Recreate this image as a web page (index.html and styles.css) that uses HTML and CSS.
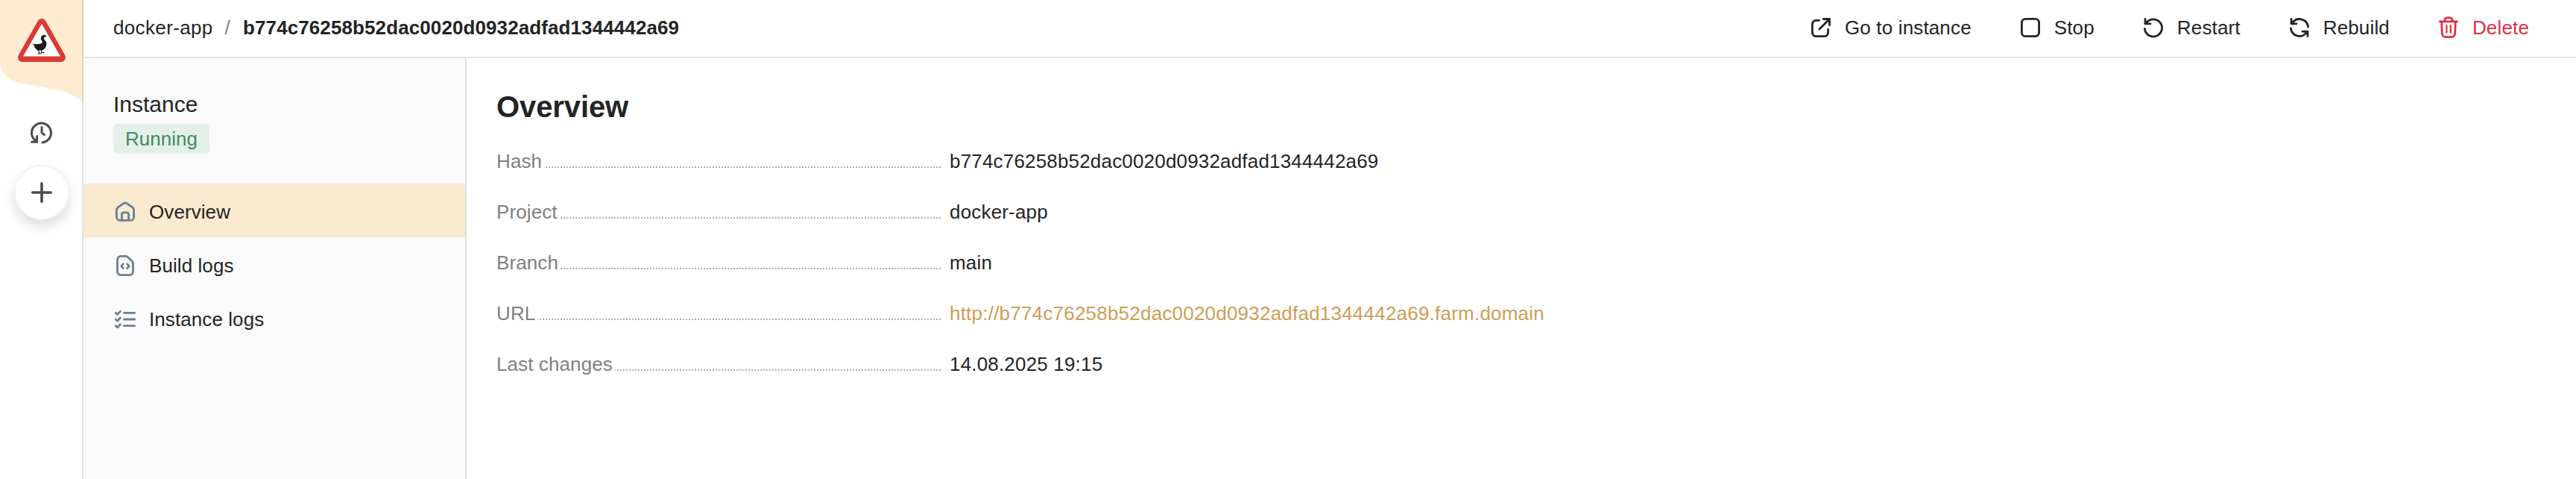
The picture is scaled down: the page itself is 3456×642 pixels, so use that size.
FILE: index.html
```html
<!DOCTYPE html>
<html lang="en">
<head>
<meta charset="utf-8">
<title>docker-app</title>
<link rel="stylesheet" href="styles.css">
</head>
<body>
<div class="app">
  <nav class="rail">
    <a class="brand" href="#">
      <svg width="112" height="140" viewBox="0 0 112 140">
        <path fill="#fdecd2" d="M0 0H112V137C102 129 92 124 80 121L26 111C12 109 1 98 0 83Z"/>
        <path fill="#dc3b33" stroke="#dc3b33" stroke-width="12" stroke-linejoin="round" d="M56 31L82 77H30Z"/>
        <path fill="#fff" d="M56 32L81 75.5H31Z"/>
        <g transform="scale(.33333)">
          <path fill="#1d1b1c" d="M165 151C166 143 174 139 181 141L188 146L181 149C174 151 177 157 181 162C188 169 189 178 185 187C181 197 176 200 170 202L152 203C144 198 138 190 138 184L132 176C140 178 152 178 162 176C170 174 172 170 169 165C165 160 163 156 165 151Z"/>
          <path fill="none" stroke="#1d1b1c" stroke-width="3.5" d="M155 200L158 215M152 216H166M167 200V212M164 212H178"/>
        </g>
      </svg>
    </a>
    <a class="history" href="#">
      <svg width="32" height="32" viewBox="0 0 32 32" class="icon thick"><path d="M17 29A13 13 0 1 0 6.5 25.5L9 27.5M9.6 20.5V28.2H2.6M16 8.5V15.5L19.3 18.6"/></svg>
    </a>
    <button class="add">
      <svg width="32" height="32" viewBox="0 0 32 32" class="icon plus"><path d="M16 3.7V28.3M3.7 16H28.3"/></svg>
    </button>
  </nav>
  <div class="page">
    <header class="topbar">
      <div class="crumbs">
        <a class="crumb" href="#">docker-app</a><span class="slash">/</span><strong class="current">b774c76258b52dac0020d0932adfad1344442a69</strong>
      </div>
      <div class="actions">
        <button class="action"><svg width="32" height="32" viewBox="0 0 32 32" class="icon"><path d="M13.5 6.4H9.4A5 5 0 0 0 4.4 11.4V22.6A5 5 0 0 0 9.4 27.6H20.6A5 5 0 0 0 25.6 22.6V18.5M19.3 4.5H27.5V12.7M27 5L14 18"/></svg>Go to instance</button>
        <button class="action"><svg width="32" height="32" viewBox="0 0 32 32" class="icon"><rect x="4.4" y="4.4" width="23.2" height="23.2" rx="5"/></svg>Stop</button>
        <button class="action"><svg width="32" height="32" viewBox="0 0 32 32" class="icon"><path d="M4.4 17.5A11.6 11.6 0 1 0 7 9M5 4.5V10.8H12M5.5 10.5L9 7"/></svg>Restart</button>
        <button class="action"><svg width="32" height="32" viewBox="0 0 32 32" class="icon"><path d="M7 9A11.6 11.6 0 0 1 27.6 15M5 4.5V10.8H12M5.5 10.5L9 7M4.4 17A11.6 11.6 0 0 0 25 23M27 27.5V21.2H20M26.5 21.5L23 25"/></svg>Rebuild</button>
        <button class="action danger"><svg width="32" height="32" viewBox="0 0 32 32" class="icon"><path d="M4.3 7.8H27.7M10.7 7.5V6.8A4.2 4.2 0 0 1 14.9 2.6H17.1A4.2 4.2 0 0 1 21.3 6.8V7.5M6.7 8.5L7.3 24.2A4.6 4.6 0 0 0 11.9 28.6H20.1A4.6 4.6 0 0 0 24.7 24.2L25.3 8.5"/><path stroke-width="2.2" d="M13.4 13.3V22.7M18.8 13.3V22.7"/></svg>Delete</button>
      </div>
    </header>
    <div class="body">
      <aside class="sidebar">
        <div class="summary">
          <div class="kind">Instance</div>
          <span class="badge">Running</span>
        </div>
        <a class="item active" href="#"><svg width="32" height="32" viewBox="0 0 32 32" class="icon"><path d="M13.9 4.7Q16 3.3 18.1 4.7L25.4 9.6Q27.6 11.2 27.6 13.8V23A4.3 4.3 0 0 1 23.3 27.3H8.7A4.3 4.3 0 0 1 4.4 23V13.8Q4.4 11.2 6.6 9.6ZM11.4 27V19.3A2.5 2.5 0 0 1 13.9 16.8H18.1A2.5 2.5 0 0 1 20.6 19.3V27"/></svg>Overview</a>
        <a class="item" href="#"><svg width="32" height="32" viewBox="0 0 32 32" class="icon"><path d="M10.2 3.4H16.4Q18.2 3.4 19.6 4.7L25.2 10.1Q26.5 11.4 26.5 13.2V24A4.6 4.6 0 0 1 21.9 28.6H10.1A4.6 4.6 0 0 1 5.5 24V8A4.6 4.6 0 0 1 10.2 3.4ZM13.4 13.7L10.8 16.7L13.4 19.7M18.6 13.7L21.2 16.7L18.6 19.7"/></svg>Build logs</a>
        <a class="item" href="#"><svg width="32" height="32" viewBox="0 0 32 32" class="icon"><path d="M14.5 7.3H28.6M14.5 16H28.6M14.5 24.7H28.6M3.2 7.3L5.6 9.4L9.4 5.3M3.2 16L5.6 18.1L9.4 14M3.2 24.7L5.6 26.8L9.4 22.7"/></svg>Instance logs</a>
      </aside>
      <main class="content">
        <h1 class="title">Overview</h1>
        <dl class="facts">
          <div class="fact"><dt class="label">Hash</dt><dd class="value">b774c76258b52dac0020d0932adfad1344442a69</dd></div>
          <div class="fact"><dt class="label">Project</dt><dd class="value">docker-app</dd></div>
          <div class="fact"><dt class="label">Branch</dt><dd class="value">main</dd></div>
          <div class="fact"><dt class="label">URL</dt><dd class="value"><a class="link" href="#">http://b774c76258b52dac0020d0932adfad1344442a69.farm.domain</a></dd></div>
          <div class="fact"><dt class="label">Last changes</dt><dd class="value">14.08.2025 19:15</dd></div>
        </dl>
      </main>
    </div>
  </div>
</div>
</body>
</html>
```
FILE: styles.css
```css
* { box-sizing: border-box; }
body {
  margin: 0;
  background: #fff;
  color: #242424;
  font-family: "Liberation Sans", Arial, sans-serif;
  font-size: 26px;
  line-height: 40px;
  letter-spacing: 0.22px;
}
a { color: inherit; text-decoration: none; }
button { font: inherit; letter-spacing: inherit; color: inherit; background: none; border: 0; padding: 0; }
.app { display: flex; height: 642px; overflow: hidden; }
.icon {
  flex: none;
  display: block;
  fill: none;
  stroke: currentColor;
  stroke-width: 2.8;
  stroke-linecap: round;
  stroke-linejoin: round;
}
.thick { stroke-width: 3; }
.plus { stroke-width: 3.6; }

.rail {
  position: relative;
  flex: none;
  width: 112px;
  display: flex;
  flex-direction: column;
  align-items: center;
  color: #4b4b4b;
}
.rail::after {
  content: "";
  position: absolute;
  inset: 0 0 0 auto;
  width: 2px;
  background: rgba(0, 0, 0, 0.11);
}
.brand { height: 140px; }
.brand svg { display: block; }
.history { margin-top: 22px; }
.add {
  display: flex;
  align-items: center;
  justify-content: center;
  width: 74px;
  height: 74px;
  margin-top: 27px;
  border: 2px solid #f4f4f4;
  border-radius: 50%;
  background: #fff;
  background-clip: padding-box;
  box-shadow: 0 8px 16px rgba(0, 0, 0, 0.14);
}

.page { flex: 1; min-width: 0; display: flex; flex-direction: column; }
.topbar {
  flex: none;
  height: 78px;
  padding: 0 63px 2px 40px;
  display: flex;
  align-items: center;
  justify-content: space-between;
  border-bottom: 2px solid #e3e3e3;
}
.crumbs { display: flex; }
.crumb { letter-spacing: 0.35px; }
.slash { margin: 0 17px 0 16px; color: #808080; }
.current { letter-spacing: 0.1px; }
.actions { display: flex; gap: 63px; letter-spacing: 0.15px; }
.action { display: flex; align-items: center; gap: 16px; white-space: nowrap; }

.danger { color: #dc3045; }

.body { flex: 1; display: flex; }
.sidebar {
  flex: none;
  width: 514px;
  background: #fafafa;
  border-right: 2px solid #e0e0e0;
  letter-spacing: 0.08px;
}
.summary { height: 168px; padding: 40px 40px 0; }
.kind { font-size: 30px; line-height: 44px; letter-spacing: 0; }
.badge {
  display: block;
  width: fit-content;
  margin-top: 4px;
  padding: 0 16px;
  border-radius: 6px;
  background: #e3f0e7;
  color: #46895f;
  letter-spacing: 0;
}
.item {
  display: flex;
  align-items: center;
  gap: 16px;
  height: 72px;
  padding: 4px 40px 0;
}
.item .icon { color: #6c7e93; }
.active { background: #f9e9cf; }

.content { flex: 1; padding: 40px; }
.title { margin: 0; font-size: 40px; line-height: 50px; letter-spacing: -0.1px; }
.facts { margin: 28px 0 0; display: flex; flex-direction: column; gap: 28px; }
.fact { display: flex; }
.label { width: 596px; margin-right: 12px; display: flex; color: #808080; white-space: nowrap; letter-spacing: 0.1px; }
.label::after {
  content: "";
  flex: 1;
  height: 2px;
  margin: 27px 0 0 3px;
  background: repeating-linear-gradient(to left, #b0b0b0 0 2px, transparent 2px 4px);
}
.value { margin: 0; letter-spacing: 0.18px; }
.link { color: #cc9e58; letter-spacing: 0.22px; }
```
